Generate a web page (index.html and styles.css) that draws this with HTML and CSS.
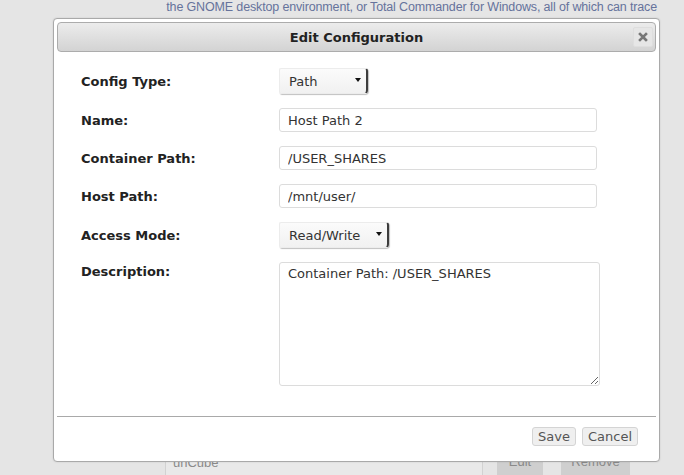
FILE: index.html
```html
<!DOCTYPE html>
<html lang="en">
<head>
<meta charset="utf-8">
<title>Edit Configuration</title>
<link rel="stylesheet" href="styles.css">
</head>
<body>
<div class="page">
  <p class="intro">the GNOME desktop environment, or Total Commander for Windows, all of which can trace</p>
  <div class="bg-row">
    <div class="bg-field">unCube</div>
    <span class="bg-btn bg-edit">Edit</span>
    <span class="bg-btn bg-remove">Remove</span>
  </div>
</div>

<div class="dialog">
  <div class="titlebar">
    <span class="title">Edit Configuration</span>
    <span class="close" title="close">
      <svg width="10" height="10" viewBox="0 0 10 10"><path d="M2 2 L8 8 M8 2 L2 8" stroke="#777" stroke-width="2.6" stroke-linecap="square"/></svg>
    </span>
  </div>
  <div class="form">
    <label class="lbl">Config Type:</label>
    <div class="select sel-path"><span>Path</span><span class="caret"></span></div>

    <label class="lbl">Name:</label>
    <input class="inp" type="text" value="Host Path 2">

    <label class="lbl">Container Path:</label>
    <input class="inp" type="text" value="/USER_SHARES">

    <label class="lbl">Host Path:</label>
    <input class="inp" type="text" value="/mnt/user/">

    <label class="lbl">Access Mode:</label>
    <div class="select sel-mode"><span>Read/Write</span><span class="caret"></span></div>

    <label class="lbl lbl-top">Description:</label>
    <textarea class="area">Container Path: /USER_SHARES</textarea>
  </div>
  <div class="pane">
    <button class="btn">Save</button>
    <button class="btn">Cancel</button>
  </div>
</div>
</body>
</html>
```

FILE: styles.css
```css
html, body {
  margin: 0;
  padding: 0;
}
body {
  width: 684px;
  height: 475px;
  overflow: hidden;
  background: #e5e5e5;
  font-family: "DejaVu Sans", Verdana, sans-serif;
}
.page {
  height: 475px;
  display: flex;
  flex-direction: column;
}
.intro {
  margin: 0;
  padding: 0 27px 0 0;
  text-align: right;
  font-family: "Liberation Sans", Arial, sans-serif;
  font-size: 12.5px;
  letter-spacing: -0.15px;
  line-height: 14px;
  color: #66739c;
}
.bg-row {
  margin-top: auto;
  height: 20px;
  display: flex;
  padding-left: 165px;
}
.bg-field {
  width: 318px;
  height: 26px;
  margin-top: -2px;
  padding: 1px 7px 0;
  border: 1px solid #d2d2d2;
  background: #e9e9e9;
  color: #8a8a8a;
  font-family: "Liberation Sans", Arial, sans-serif;
  font-size: 13px;
  line-height: 15px;
  box-sizing: border-box;
}
.bg-btn {
  height: 26px;
  margin-top: -4px;
  padding: 3px 0 0;
  box-sizing: border-box;
  background: #cfcfcf;
  color: #8a8a8a;
  font-family: "Liberation Sans", Arial, sans-serif;
  font-size: 13px;
  line-height: 15px;
  text-align: center;
  border-radius: 3px;
}
.bg-edit {
  width: 46px;
  margin-left: 14px;
}
.bg-remove {
  width: 69px;
  margin-left: 18px;
}

.dialog {
  position: absolute;
  left: 53px;
  top: 18px;
  width: 607px;
  height: 444px;
  box-sizing: border-box;
  padding: 3px;
  background: #fff;
  border: 1px solid #a9a9a9;
  border-radius: 4px;
  display: flex;
  flex-direction: column;
  box-shadow: 0 0 2px rgba(0,0,0,0.12);
}
.titlebar {
  height: 30px;
  box-sizing: border-box;
  border: 1px solid #acacac;
  border-radius: 4px;
  background: linear-gradient(#ececec, #d3d3d3);
  display: grid;
  grid-template-columns: 1fr auto 1fr;
  align-items: center;
}
.title {
  grid-column: 2;
  font-weight: bold;
  font-size: 13px;
  color: #222;
}
.close {
  grid-column: 3;
  justify-self: end;
  margin-right: 2px;
  width: 20px;
  height: 20px;
  box-sizing: border-box;
  border: 1px solid #dedede;
  border-radius: 2px;
  background: #e6e6e6;
  display: flex;
  align-items: center;
  justify-content: center;
}
.close svg {
  display: block;
}
.form {
  flex: 1;
  display: grid;
  grid-template-columns: 198px 1fr;
  grid-auto-rows: auto;
  row-gap: 14px;
  align-content: start;
  padding: 16px 0 0 24px;
}
.lbl {
  align-self: center;
  font-weight: bold;
  font-size: 13px;
  color: #222;
}
.lbl-top {
  align-self: start;
  padding-top: 2px;
}
.inp {
  width: 318px;
  height: 24px;
  box-sizing: border-box;
  margin: 0;
  padding: 0 8px;
  border: 1px solid #dcdcdc;
  border-radius: 3px;
  background: #fff;
  font-family: "DejaVu Sans", Verdana, sans-serif;
  font-size: 13px;
  color: #333;
  outline: none;
}
.select {
  height: 26px;
  box-sizing: border-box;
  display: flex;
  align-items: center;
  justify-content: space-between;
  padding: 0 5px 0 9px;
  border: 1px solid #ececec;
  border-right: 2px solid #3c3c3c;
  border-radius: 2px 3px 4px 2px;
  background: linear-gradient(#fbfbfb, #f1f1f1);
  box-shadow: 1px 1px 1px rgba(0,0,0,0.25);
  font-size: 13px;
  color: #333;
}
.sel-path {
  width: 89px;
}
.sel-mode {
  width: 110px;
}
.caret {
  width: 0;
  height: 0;
  border-left: 3px solid transparent;
  border-right: 3px solid transparent;
  border-top: 4px solid #111;
  margin-top: -2px;
}
.area {
  width: 321px;
  height: 124px;
  box-sizing: border-box;
  margin: 0;
  padding: 3px 8px;
  border: 1px solid #dcdcdc;
  border-radius: 3px;
  font-family: "DejaVu Sans", Verdana, sans-serif;
  font-size: 13px;
  line-height: 16px;
  color: #333;
  resize: both;
  outline: none;
}
.pane {
  border-top: 1px solid #a9a9a9;
  padding: 10px 18px 12px 0;
  display: flex;
  justify-content: flex-end;
  gap: 6px;
}
.btn {
  height: 19px;
  box-sizing: border-box;
  margin: 0;
  padding: 0 5px;
  border: 1px solid #d4d4d4;
  border-radius: 3px;
  background: #efefef;
  font-family: "DejaVu Sans", Verdana, sans-serif;
  font-size: 13px;
  line-height: 16px;
  color: #555;
}
```
